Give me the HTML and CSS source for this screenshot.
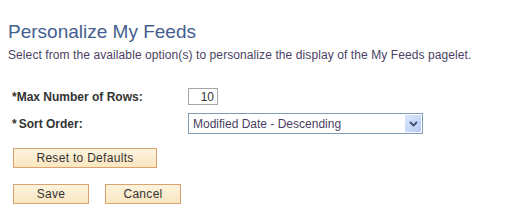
FILE: index.html
```html
<!DOCTYPE html>
<html lang="en">
<head>
  <meta charset="UTF-8">
  <title>Personalize My Feeds</title>
  <link rel="stylesheet" href="styles.css">
</head>
<body>
  <div class="page">
    <h1 class="title">Personalize My Feeds</h1>
    <p class="intro">Select from the available option(s) to personalize the display of the My Feeds pagelet.</p>

    <div class="form">
      <div class="row">
        <label class="label" for="rows">*Max Number of Rows:</label>
        <input class="num" id="rows" type="text" value="10">
      </div>
      <div class="row">
        <label class="label" for="sort">*<span class="sp"></span>Sort Order:</label>
        <div class="select">
          <span class="select-text">Modified Date - Descending</span>
          <span class="select-btn">
            <svg width="9" height="6" viewBox="0 0 9 6"><path d="M1 1 L4.5 4.5 L8 1" fill="none" stroke="#3c4f72" stroke-width="1.8"/></svg>
          </span>
        </div>
      </div>
    </div>

    <div class="actions first">
      <button class="btn btn-wide">Reset to Defaults</button>
    </div>
    <div class="actions">
      <button class="btn">Save</button>
      <button class="btn">Cancel</button>
    </div>
  </div>
</body>
</html>
```

FILE: styles.css
```css
/* Personalize page */
body {
  margin: 0;
  padding: 0;
  background-color: #fff;
  font-family: "Liberation Sans", Arial, sans-serif;
  font-size: 12px;
  color: #333;
}
.page {
  padding: 20px 0 0 8px;
}
.title {
  margin: 0;
  font-size: 19px;
  font-weight: normal;
  line-height: 24px;
  color: #445f8f;
}
.intro {
  margin: 4px 0 0;
  line-height: 15px;
  color: #4b3f63;
  letter-spacing: 0.09px;
}
.form {
  margin-top: 25px;
  padding-left: 4px;
}
.row {
  display: flex;
  align-items: center;
  margin-bottom: 8px;
}
.row:last-child {
  margin-bottom: 0;
}
.label {
  width: 176px;
  font-weight: bold;
  color: #333;
}
.sp {
  display: inline-block;
  width: 2px;
}
.num {
  box-sizing: border-box;
  width: 30px;
  height: 17px;
  padding: 0 3px;
  border: 1px solid #a5a5a5;
  font: 12px "Liberation Sans", Arial, sans-serif;
  color: #333;
  text-align: right;
}
.select {
  box-sizing: border-box;
  display: flex;
  align-items: center;
  justify-content: space-between;
  width: 235px;
  height: 21px;
  border: 1px solid #7f9db9;
  padding: 1px 1px 1px 4px;
  color: #4b3f63;
}
.select-btn {
  display: flex;
  align-items: center;
  justify-content: center;
  width: 16px;
  height: 17px;
  background: linear-gradient(135deg, #dbe6fb, #b9ccf5);
}
.actions {
  display: flex;
  gap: 16px;
  padding-left: 5px;
  margin-top: 16px;
}
.actions.first {
  margin-top: 14px;
}
.btn {
  box-sizing: border-box;
  width: 76px;
  height: 20px;
  padding: 0;
  border: 1px solid #dba36f;
  background: linear-gradient(#fdf3dd, #fae6c0);
  font: 12px "Liberation Sans", Arial, sans-serif;
  color: #333;
  letter-spacing: 0.3px;
}
.btn-wide {
  width: 144px;
}
```
